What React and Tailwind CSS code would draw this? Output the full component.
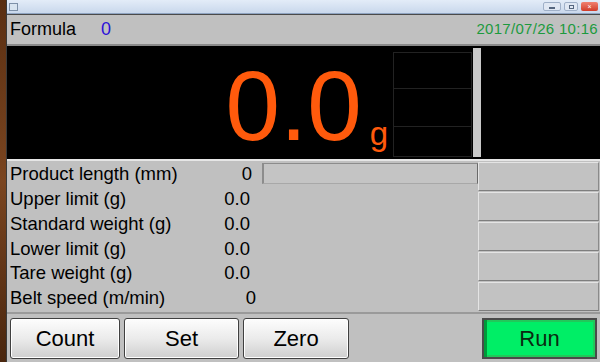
import React from "react";

const rows = [
  { label: "Product length (mm)", value: "0", pad: "pr-[8px]" },
  { label: "Upper limit (g)", value: "0.0", pad: "pr-[10px]" },
  { label: "Standard weight (g)", value: "0.0", pad: "pr-[10px]" },
  { label: "Lower limit (g)", value: "0.0", pad: "pr-[10px]" },
  { label: "Tare weight (g)", value: "0.0", pad: "pr-[10px]" },
  { label: "Belt speed (m/min)", value: "0", pad: "pr-[4px]" },
];

function GrayButton({ label, width }) {
  return (
    <button
      className={`${width} h-[41px] rounded-[3px] border border-[#404040] bg-gradient-to-b from-[#fdfdfd] via-[#ebebeb] to-[#cfcfcf] text-[22px] text-black shadow-[inset_0_0_0_1px_#ffffff]`}
    >
      {label}
    </button>
  );
}

export default function App() {
  return (
    <div
      className="w-[600px] h-[362px] flex overflow-hidden bg-[#c0c0c0]"
      style={{ fontFamily: '"Liberation Sans", Arial, sans-serif' }}
    >
      {/* desktop edge */}
      <div className="w-[6px] h-full bg-gradient-to-b from-[#5a2f12] via-[#7a4520] to-[#4a260e]" />

      <div className="flex-1 flex flex-col border-l border-[#3a3a3a]">
        {/* title bar */}
        <div className="h-[14px] flex items-center justify-between bg-gradient-to-b from-[#e3ecf8] to-[#c9d8ec] border-b border-[#8ea3c0]">
          <div className="ml-[2px] w-[9px] h-[8px] bg-[#d8e4f0] border border-[#7d90a8]" />
          <div className="flex items-center gap-[3px] mr-[2px]">
            <div className="w-[18px] h-[9px] rounded-[2px] border border-[#9fb0c8] bg-[#dfe7f3] flex items-end justify-center pb-[1px]">
              <div className="w-[6px] h-[2px] bg-[#55667f]" />
            </div>
            <div className="w-[14px] h-[9px] rounded-[2px] border border-[#9fb0c8] bg-[#dfe7f3] flex items-center justify-center">
              <div className="w-[5px] h-[4px] border border-[#55667f]" />
            </div>
            <div className="w-[17px] h-[9px] rounded-[2px] bg-gradient-to-b from-[#f08070] to-[#d03a28] flex items-center justify-center text-[7px] leading-none text-white">
              ×
            </div>
          </div>
        </div>

        {/* header */}
        <div className="h-[29px] flex items-center justify-between border-t border-[#4a4a4a] bg-[#c0c0c0] pl-[3px] pr-[2px]">
          <div className="flex items-center">
            <span className="text-[18px] text-black">Formula</span>
            <span className="ml-[25px] text-[18px] text-[#2b10d8]">0</span>
          </div>
          <span className="text-[15px] text-[#1c9a3e] tracking-[0.3px]">2017/07/26 10:16</span>
        </div>

        {/* weight display */}
        <div className="h-[115px] mt-[1px] flex bg-black border-t-2 border-[#8a8a8a]">
          <div className="w-[386px] flex items-end justify-end pb-[4px] pr-[5px]">
            <span className="text-[98px] leading-none text-[#ff5a0c]">0.0</span>
            <span className="ml-[8px] mb-[5px] text-[33px] leading-none text-[#ff5a0c]">g</span>
          </div>
          <div className="w-[79px] flex flex-col justify-center pt-[6px] pb-[2px]">
            <div className="h-[37px] border border-[#222222]" />
            <div className="h-[38px] border border-t-0 border-[#222222]" />
            <div className="h-[30px] border border-t-0 border-[#222222]" />
          </div>
          <div className="w-[8px] my-[2px] ml-[1px] bg-[#c9c9c9]" />
          <div className="flex-1" />
        </div>

        {/* data area */}
        <div className="flex-1 flex flex-col border-t-2 border-[#e6e6e6]">
          <div className="flex-1 flex">
            <div className="w-[253px] flex flex-col pl-[3px] pt-[1px]">
              {rows.map((r) => (
                <div key={r.label} className="h-[24.8px] flex items-center justify-between">
                  <span className="text-[18.5px] text-black leading-none">{r.label}</span>
                  <span className={`text-[18.5px] text-black leading-none ${r.pad}`}>{r.value}</span>
                </div>
              ))}
            </div>
            <div className="w-[218px] pt-[2px] pl-[2px]">
              <div className="h-[21px] bg-[#c4c4c4] border-l-2 border-t border-[#8c8c8c] border-r border-b border-r-[#6a6a6a] border-b-[#a8a8a8]" />
            </div>
            <div className="flex-1 flex flex-col gap-[1px] pt-[1px] pr-[1px]">
              {[0, 1, 2, 3, 4].map((i) => (
                <div
                  key={i}
                  className="h-[29px] bg-[#c2c2c2] border border-t-[#e4e4e4] border-l-[#e4e4e4] border-r-[#8a8a8a] border-b-[#7e7e7e]"
                />
              ))}
            </div>
          </div>

          {/* buttons */}
          <div className="h-[50px] flex items-center border-t-2 border-[#9a9a9a] pl-[3px] pr-[3px]">
            <GrayButton label="Count" width="w-[110px]" />
            <div className="w-[4px]" />
            <GrayButton label="Set" width="w-[115px]" />
            <div className="w-[4px]" />
            <GrayButton label="Zero" width="w-[106px]" />
            <div className="flex-1" />
            <button className="w-[115px] h-[41px] border-2 border-[#4a4a4a] bg-[#00ee66] text-[22px] text-[#0a2a10] shadow-[inset_3px_0_0_#009a3a,inset_0_0_0_2px_#22c85a]">
              Run
            </button>
          </div>
        </div>
      </div>
    </div>
  );
}
